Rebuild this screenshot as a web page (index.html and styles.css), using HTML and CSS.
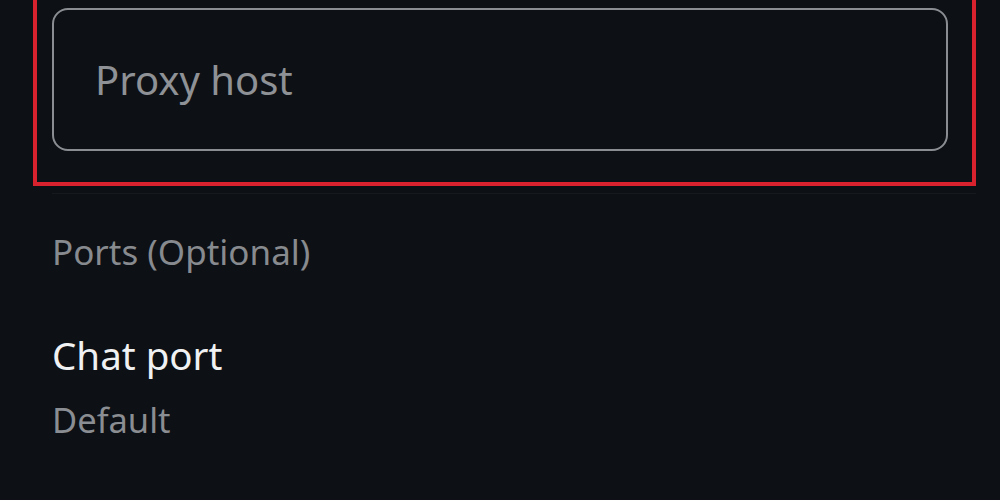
FILE: index.html
```html
<!DOCTYPE html>
<html>
<head>
<meta charset="utf-8">
<link rel="stylesheet" href="styles.css">
</head>
<body>
<div class="page">
  <section class="highlight">
    <div class="field">
      <span class="placeholder">Proxy host</span>
    </div>
  </section>
  <div class="divider"></div>
  <div class="section-title">Ports (Optional)</div>
  <div class="item">
    <div class="item-title">Chat port</div>
    <div class="item-sub">Default</div>
  </div>
</div>
</body>
</html>
```
FILE: styles.css
```css
html, body {
  margin: 0;
  padding: 0;
  background: #0d1014;
  height: 100%;
  overflow: hidden;
}
body {
  font-family: "Noto Sans", "Open Sans", sans-serif;
}
.page {
  display: flex;
  flex-direction: column;
}
.highlight {
  margin: 0 24px 0 33px;
  border: 4.5px solid #d8232e;
  border-top: none;
  padding: 8px 24px 31px 15px;
}
.field {
  height: 139px;
  border: 2px solid #8a8d91;
  border-radius: 16px;
  display: flex;
  align-items: center;
  padding-left: 41px;
}
.placeholder {
  color: #8e9195;
  font-size: 40px;
}
.divider {
  height: 1px;
  margin: 7px 24px 0 52px;
  background: #16191d;
}
.section-title {
  margin: 34px 0 0 52px;
  color: #878a8e;
  font-size: 35px;
}
.item {
  margin: 54px 0 0 52px;
}
.item-title {
  color: #f0f1f2;
  font-size: 38.5px;
}
.item-sub {
  color: #8a8d91;
  font-size: 34.5px;
  margin-top: 15px;
}
```
